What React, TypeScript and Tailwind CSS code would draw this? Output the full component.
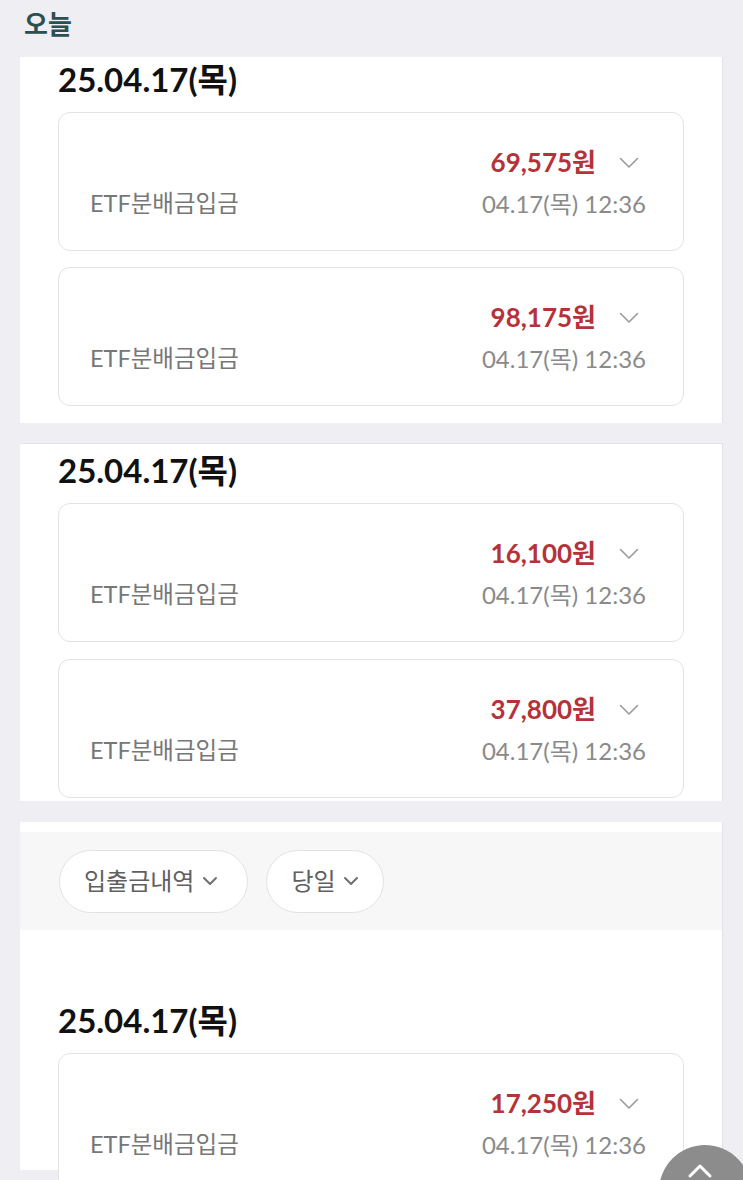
import React from "react";

const font = { fontFamily: '"Lato", "Noto Sans CJK KR", sans-serif' };

function Chevron({ className = "" }: { className?: string }) {
  return (
    <svg width="20" height="12" viewBox="0 0 20 12" className={className} fill="none">
      <path d="M1.5 1.5 L10 10 L18.5 1.5" stroke="#9a9a9a" strokeWidth="1.6" strokeLinecap="round" strokeLinejoin="round" />
    </svg>
  );
}

function SmallChevron() {
  return (
    <svg width="16" height="10" viewBox="0 0 16 10" fill="none">
      <path d="M2 2 L8 8 L14 2" stroke="#707070" strokeWidth="2" strokeLinecap="round" strokeLinejoin="round" />
    </svg>
  );
}

function Card({ amount }: { amount: string }) {
  return (
    <div className="h-[139px] rounded-[12px] border border-[#e3e3e6] bg-white pl-[31px] pr-[37px] flex flex-col justify-center">
      <div className="flex items-center justify-end h-[32px]">
        <span className="text-[26px] font-bold text-[#b5323a] leading-none">{amount}</span>
        <Chevron className="ml-[23px] mr-[7px] mt-[2px]" />
      </div>
      <div className="flex items-center justify-between mt-[12px] h-[28px]">
        <span className="text-[23.5px] text-[#777777] leading-none">ETF분배금입금</span>
        <span className="text-[24px] text-[#8a8a8a] leading-none">04.17(목) 12:36</span>
      </div>
    </div>
  );
}

function DateTitle({ className = "" }: { className?: string }) {
  return (
    <div className={`pl-[38px] text-[33px] font-bold text-[#111111] leading-none ${className}`}>25.04.17(목)</div>
  );
}

export default function App() {
  return (
    <div className="relative w-[743px] h-[1180px] overflow-hidden bg-[#efeef3]" style={font}>
      <div className="pl-[24px] pt-[8px] h-[57px] text-[26px] font-bold text-[#2c5050] leading-[32px]">오늘</div>

      <div className="mx-[20px] bg-white border-r border-[#e2e2e7] pt-[6px] pb-[17px]">
        <DateTitle />
        <div className="px-[38px] mt-[16px] flex flex-col gap-[16px]">
          <Card amount="69,575원" />
          <Card amount="98,175원" />
        </div>
      </div>

      <div className="mx-[20px] mt-[20px] bg-white border-t border-r border-[#e2e2e7] pt-[10px] pb-[3px]">
        <DateTitle />
        <div className="px-[38px] mt-[16px] flex flex-col gap-[17px]">
          <Card amount="16,100원" />
          <Card amount="37,800원" />
        </div>
      </div>

      <div className="mx-[20px] mt-[21px] bg-white border-r border-[#e2e2e7] pt-[10px] h-[348px]">
        <div className="bg-[#f7f7f8] h-[98px] px-[39px] flex items-center gap-[18px]">
          <div className="h-[63px] rounded-full border border-[#e2e2e4] bg-white pl-[24px] pr-[29px] flex items-center gap-[8px]">
            <span className="text-[24px] text-[#606060] leading-none">입출금내역</span>
            <SmallChevron />
          </div>
          <div className="h-[63px] rounded-full border border-[#e2e2e4] bg-white pl-[24px] pr-[24px] flex items-center gap-[7px]">
            <span className="text-[24px] text-[#606060] leading-none">당일</span>
            <SmallChevron />
          </div>
        </div>
        <DateTitle className="mt-[74px]" />
        <div className="px-[38px] mt-[16px] flex flex-col gap-[17px]">
          <Card amount="17,250원" />
        </div>
      </div>

      <div className="absolute left-[659px] top-[1145px] w-[92px] h-[92px] rounded-full bg-[#8c8c8c] flex justify-center pt-[18px]">
        <svg width="26" height="16" viewBox="0 0 26 16" fill="none" className="-ml-[10px]">
          <path d="M3 13 L13 3 L23 13" stroke="#ffffff" strokeWidth="3" strokeLinecap="round" strokeLinejoin="round" />
        </svg>
      </div>
    </div>
  );
}
